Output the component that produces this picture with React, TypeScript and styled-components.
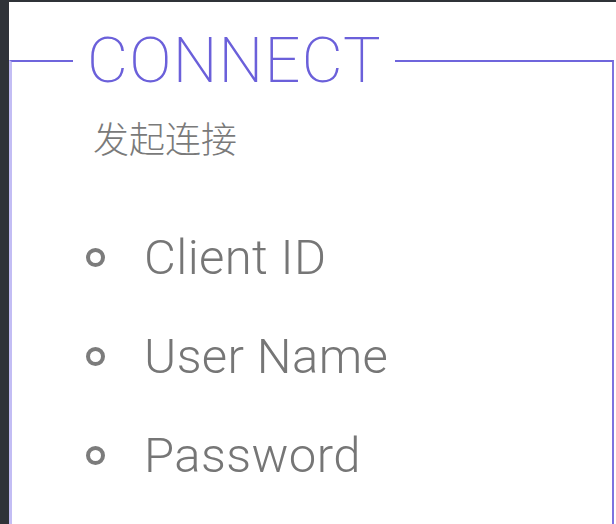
import React from "react"
import styled, { createGlobalStyle } from "styled-components"

const GlobalStyle = createGlobalStyle`
  html, body {
    margin: 0;
    padding: 0;
    background: #2f3338;
    height: 100%;
    overflow: hidden;
  }
  #root {
    height: 100%;
  }
`

const Page = styled.div`
  display: flex;
  height: 100%;
  padding: 2px 0 0 9px;
  box-sizing: border-box;
`

const Panel = styled.div`
  flex: 1;
  background: #ffffff;
  padding-top: 28px;
  padding-right: 2px;
`

const Frame = styled.fieldset`
  margin: 0;
  padding: 0;
  min-width: 0;
  height: 100%;
  box-sizing: border-box;
  border-top: 2px solid #6f65dc;
  border-left: 3px solid #c3bdf4;
  border-right: 2px solid #7d73df;
  border-bottom: none;
`

const Title = styled.legend`
  margin-left: 61px;
  padding: 0 13px 0 14px;
  font-family: Roboto, "Liberation Sans", sans-serif;
  font-weight: 200;
  font-size: 63px;
  line-height: 62px;
  color: #6b60da;
  letter-spacing: 1.3px;
`

const Subtitle = styled.div`
  margin: 25px 0 0 81px;
  font-family: "Noto Sans CJK SC", sans-serif;
  font-weight: 300;
  font-size: 36px;
  line-height: 40px;
  color: #7a7a7a;
`

const FieldList = styled.ul`
  list-style: none;
  margin: 51px 0 0 0;
  padding: 0 0 0 74px;
`

const Field = styled.li`
  display: flex;
  align-items: center;
  height: 99px;
`

const Bullet = styled.span`
  width: 19px;
  height: 19px;
  box-sizing: border-box;
  border: 4px solid #7c7c7c;
  border-radius: 50%;
  flex-shrink: 0;
`

const Label = styled.span`
  margin-left: 39px;
  font-family: Roboto, "Liberation Sans", sans-serif;
  font-weight: 300;
  font-size: 49px;
  line-height: 99px;
  letter-spacing: 0.4px;
  color: #767676;
`

const fields = ["Client ID", "User Name", "Password"]

export default function App() {
  return (
    <Page>
      <GlobalStyle />
      <Panel>
        <Frame>
          <Title>CONNECT</Title>
          <Subtitle>发起连接</Subtitle>
          <FieldList>
            {fields.map(name => (
              <Field key={name}>
                <Bullet />
                <Label>{name}</Label>
              </Field>
            ))}
          </FieldList>
        </Frame>
      </Panel>
    </Page>
  )
}
